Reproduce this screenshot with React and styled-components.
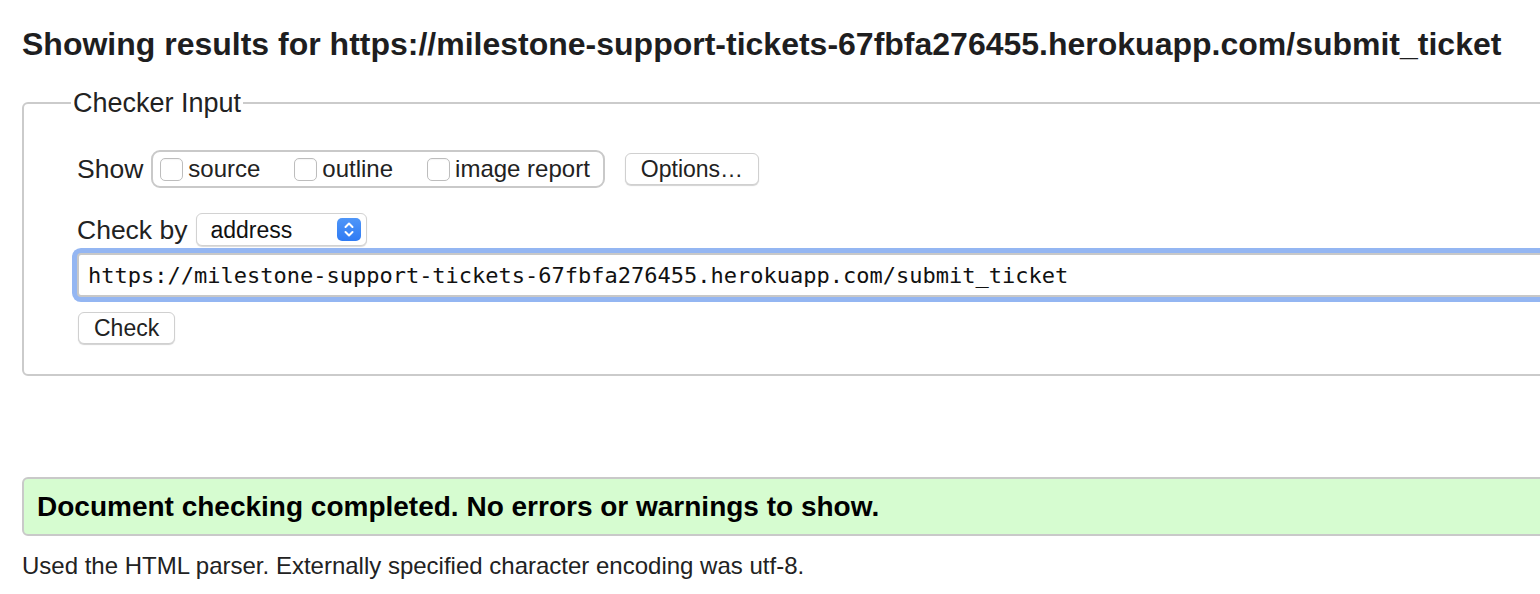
import React from 'react'
import styled, { createGlobalStyle } from 'styled-components'

const GlobalStyle = createGlobalStyle`
    html, body {
        margin: 0;
        padding: 0;
        background: #fff;
        overflow: hidden;
    }
    body {
        font-family: "Liberation Sans", Arial, sans-serif;
        color: #222;
    }
`

const Page = styled.main`
    width: 1620px;
    padding: 0 0 0 22px;
`

const Title = styled.h2`
    margin: 26px 0 0;
    font-size: 32px;
    line-height: 37px;
    font-weight: bold;
    color: #1e1e1f;
`

const Panel = styled.fieldset`
    margin: 25px 0 0;
    padding: 32px 0 30px 53px;
    border: 2px solid #cbcbcb;
    border-radius: 6px;
    min-width: 0;
`

const Legend = styled.legend`
    margin-left: -6px;
    padding: 0 2px;
    font-size: 27px;
    line-height: 30px;
    color: #222;
`

const Row = styled.div`
    display: flex;
    align-items: center;
    gap: ${p => p.$gap || 8}px;
    margin-top: ${p => p.$top || 0}px;
`

const Label = styled.span`
    font-size: 26.5px;
    line-height: 30px;
    color: #222;
`

const Group = styled.div`
    display: flex;
    align-items: center;
    height: 34px;
    padding: 0 13px 0 7px;
    border: 2px solid #c9c9c9;
    border-radius: 9px;
    gap: 34px;
`

const Option = styled.label`
    display: flex;
    align-items: center;
    gap: 5px;
    font-size: 24px;
    line-height: 28px;
    color: #222;
`

const Box = styled.input.attrs({ type: 'checkbox' })`
    appearance: none;
    margin: 0;
    width: 23px;
    height: 23px;
    border: 1px solid #bdbdbd;
    border-radius: 5px;
    background: #fff;
    box-shadow: inset 0 1px 1px rgba(0, 0, 0, 0.04);
`

const Button = styled.button`
    height: ${p => p.$h || 32}px;
    padding: 0 15px;
    margin: 0 0 0 ${p => p.$left || 0}px;
    border: 1px solid #d0d0d0;
    border-radius: 6px;
    background: #fff;
    box-shadow: 0 1px 1px rgba(0, 0, 0, 0.18);
    font-family: "Liberation Sans", Arial, sans-serif;
    font-size: 23px;
    line-height: 26px;
    color: #222;
`

const SelectWrap = styled.div`
    display: flex;
    align-items: center;
    width: 164px;
    height: 31px;
    padding: 0 5px 0 0;
    border: 1px solid #d2d2d2;
    border-radius: 6px;
    background: #fff;
    box-shadow: 0 1px 1px rgba(0, 0, 0, 0.15);
`

const Select = styled.select`
    appearance: none;
    flex: 1;
    min-width: 0;
    height: 100%;
    padding: 0 0 0 13px;
    border: none;
    outline: none;
    background: transparent;
    font-family: "Liberation Sans", Arial, sans-serif;
    font-size: 23px;
    color: #111;
`

const Stepper = styled.span`
    display: flex;
    align-items: center;
    justify-content: center;
    width: 24px;
    height: 23px;
    border-radius: 5px;
    background: linear-gradient(#4f96f8, #2f7bf4);
`

const UrlInput = styled.input`
    display: block;
    box-sizing: border-box;
    width: 1500px;
    height: 44px;
    margin-top: 7px;
    padding: 0 9px;
    border: 2px solid #c8c8c8;
    border-radius: 4px;
    outline: none;
    box-shadow: 0 0 0 5px #94b6f2;
    font-family: "DejaVu Sans Mono", "Liberation Mono", monospace;
    font-size: 22px;
    color: #111;
`

const Result = styled.div`
    margin-top: 101px;
    width: 1600px;
    box-sizing: border-box;
    height: 59px;
    display: flex;
    align-items: center;
    padding: 0 13px;
    border: 2px solid #c9c9c9;
    border-radius: 6px;
    background: #d6fcd0;
    font-size: 28px;
    font-weight: bold;
    color: #000;
`

const Note = styled.p`
    margin: 16px 0 0;
    font-size: 24px;
    line-height: 28px;
    color: #222;
`

const StepIcon = () => (
    <svg width="12" height="17" viewBox="0 0 12 17" fill="none" stroke="#fff" strokeWidth="2" strokeLinecap="round" strokeLinejoin="round">
        <path d="M2.5 6 L6 2.5 L9.5 6" />
        <path d="M2.5 11 L6 14.5 L9.5 11" />
    </svg>
)

const url = 'https://milestone-support-tickets-67fbfa276455.herokuapp.com/submit_ticket'

const App = () => (
    <Page>
        <GlobalStyle />
        <Title>Showing results for {url}</Title>
        <Panel>
            <Legend>Checker Input</Legend>
            <Row>
                <Label>Show</Label>
                <Group>
                    <Option><Box />source</Option>
                    <Option><Box />outline</Option>
                    <Option><Box />image report</Option>
                </Group>
                <Button $h={32} $left={12}>Options…</Button>
            </Row>
            <Row $top={25} $gap={9}>
                <Label>Check by</Label>
                <SelectWrap>
                    <Select defaultValue="address">
                        <option value="address">address</option>
                        <option value="upload">file upload</option>
                        <option value="text">text input</option>
                    </Select>
                    <Stepper><StepIcon /></Stepper>
                </SelectWrap>
            </Row>
            <UrlInput type="url" defaultValue={url} />
            <Row $top={15}>
                <Button $left={1}>Check</Button>
            </Row>
        </Panel>
        <Result>Document checking completed. No errors or warnings to show.</Result>
        <Note>Used the HTML parser. Externally specified character encoding was utf-8.</Note>
    </Page>
)

export default App
